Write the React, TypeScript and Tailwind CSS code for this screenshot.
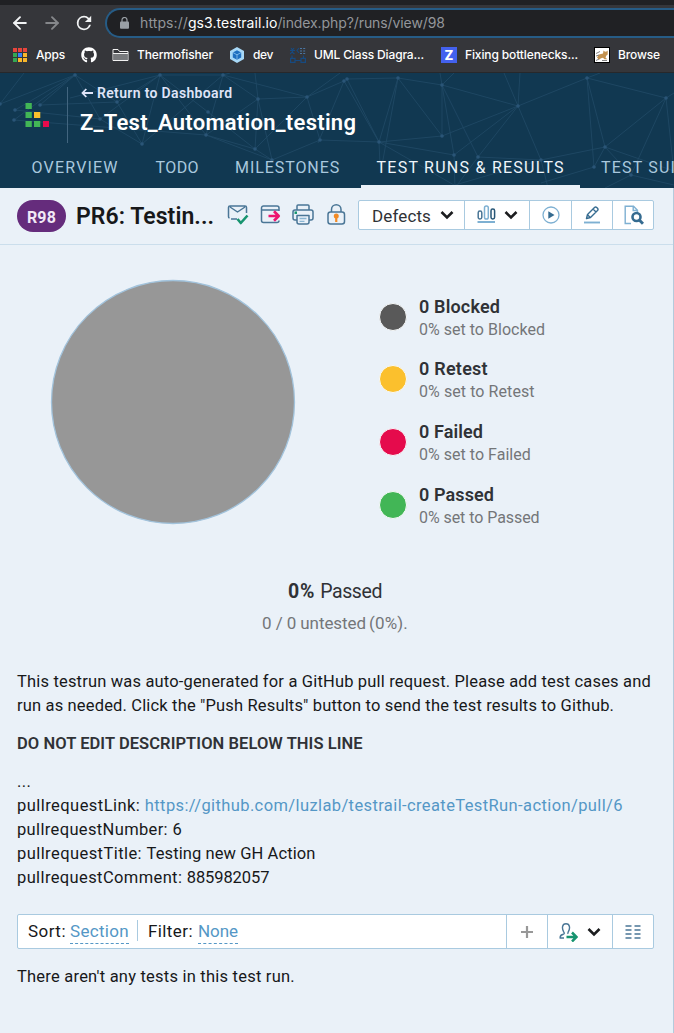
import type { ReactNode } from "react";
import { ArrowLeft, ArrowRight } from "lucide-react";
import { FaGithub } from "react-icons/fa";

const nodes: [number, number][] = [
  [75, 2], [0, 31], [15, 37], [14, 47], [40, 32], [117, 29], [160, 2], [142, 71],
  [100, 46], [223, 2], [258, 26], [307, 24], [206, 62], [208, 39], [255, 76], [272, 87],
  [320, 67], [344, 8], [347, 6], [398, 5], [442, 12], [379, 69], [442, 63], [518, 33],
  [454, 82], [478, 84], [541, 87], [587, 5], [605, 74], [666, 25], [594, 94], [631, 102],
];

const edges: [number, number][] = [
  [0, 1], [0, 2], [0, 3], [0, 4], [0, 5], [0, 8], [2, 8], [3, 12], [4, 5], [5, 7], [5, 6], [8, 6],
  [8, 7], [6, 7], [6, 12], [6, 13], [6, 9], [9, 12], [9, 10], [9, 7], [9, 11], [10, 14], [10, 11],
  [10, 12], [12, 15], [12, 14], [13, 14], [14, 11], [15, 16], [14, 15], [11, 16], [11, 17], [16, 21],
  [15, 10], [17, 21], [18, 21], [18, 19], [19, 21], [19, 22], [19, 20], [20, 22], [20, 23],
  [20, 24], [20, 25], [22, 23], [22, 21], [21, 24], [23, 24], [23, 25], [23, 26], [23, 27],
  [25, 26], [26, 28], [27, 28], [27, 30], [27, 29], [28, 29], [28, 30], [28, 31], [29, 31],
];

function Network() {
  return (
    <svg className="absolute inset-0 h-full w-full" viewBox="0 0 674 115" preserveAspectRatio="none">
      <g stroke="#295472" strokeWidth="0.9" fill="none" opacity="0.6">
        {edges.map(([a, b], i) => (
          <line key={i} x1={nodes[a][0]} y1={nodes[a][1]} x2={nodes[b][0]} y2={nodes[b][1]} />
        ))}
        <path d="M0 31L24 0M160 2L70 25M223 2L230 0M255 0L258 26M307 24L340 0M344 8L318 70M398 5L382 92M442 12L440 0M442 12L454 0M518 33L504 0M518 33L520 0M587 5L600 0M666 25L674 20M666 25L673 90M379 69L380 92M379 69L454 112M454 82L455 115M478 84L455 115M541 87L548 115M541 87L455 112M594 94L541 110M631 102L605 115M631 102L674 112M605 74L674 98" />
      </g>
      {nodes.map(([x, y], i) => (
        <circle key={i} cx={x} cy={y} r="1.8" fill="#2a5577" />
      ))}
    </svg>
  );
}

function Chevron() {
  return (
    <svg width="14" height="10" viewBox="0 0 14 10" fill="none" stroke="#1c1d1f" strokeWidth="2.6">
      <path d="M1.5 2L7 7.5L12.5 2" />
    </svg>
  );
}

function Bookmark({ icon, gap, children }: { icon: ReactNode; gap: string; children: ReactNode }) {
  return (
    <div className={`flex items-center ${gap}`}>
      {icon}
      {children}
    </div>
  );
}

const appColors = ["#e8453c", "#e8453c", "#e8453c", "#34a853", "#3b82f6", "#f9b72b", "#34a853", "#f9b72b", "#f9b72b"];

function Browser() {
  return (
    <div className="h-[73px] border-t-[5px] border-b border-t-[#202124] border-b-[#27282b] bg-[#35363a] font-['Inter',sans-serif]">
      <div className="flex h-[36px] items-center text-[#f1f3f4]">
        <ArrowLeft className="ml-[10px]" size={20} strokeWidth={2.3} />
        <ArrowRight className="ml-[12px] text-[#85878a]" size={20} strokeWidth={2.3} />
        <svg className="ml-[13px]" width="18" height="18" viewBox="0 0 24 24" fill="currentColor">
          <path d="M17.65 6.35A7.96 7.96 0 0 0 12 4a8 8 0 1 0 7.73 10h-2.08A6 6 0 1 1 12 6c1.66 0 3.14.69 4.22 1.78L13 11h7V4z" transform="translate(-2.4 -2.4) scale(1.2)" />
        </svg>
        <div className="ml-[12px] flex h-[30px] flex-1 items-center rounded-l-full border-2 border-r-0 border-[#265c86] bg-[#202124] pl-[13px] text-[14px] leading-none text-[#93969a]">
          <svg width="9" height="12" viewBox="0 0 9 12">
            <rect y="4.5" width="9" height="7.2" rx="1" fill="#9aa0a6" />
            <path d="M2 5V3a2.5 2.5 0 0 1 5 0v2" fill="none" stroke="#9aa0a6" strokeWidth="1.2" />
          </svg>
          <span className="ml-[11px] tracking-[0.1px]">https://</span>
          <span className="tracking-[0.05px] text-white">gs3.testrail.io</span>
          <span className="tracking-[-0.09px]">/index.php?/runs/view/98</span>
        </div>
      </div>
      <div className="flex h-[28px] items-center text-[12px] leading-none font-medium whitespace-nowrap text-white">
        <div className="flex items-center pl-[13px]">
          <div className="grid grid-cols-3 gap-x-[1px] gap-y-[1px]">
            {appColors.map((c, i) => (
              <span key={i} className="h-[4px] w-[4px]" style={{ backgroundColor: c }} />
            ))}
          </div>
          <span className="ml-[9px] w-[45px] tracking-[-0.2px]">Apps</span>
          <FaGithub size={16} />
        </div>
        <Bookmark
          gap="ml-[15px] gap-[8px]"
          icon={
            <svg width="17" height="14" viewBox="0 0 17 14" fill="none" stroke="#f1f1f1">
              <path d="M1 12.5V1.5h5l1.5 2H16v9zM1 5.5h15" />
              <path d="M1.5 6h14v6h-14z" fill="#77797c" stroke="none" />
            </svg>
          }
        >
          <span className="w-[92px] tracking-[-0.15px]">Thermofisher</span>
        </Bookmark>
        <Bookmark
          gap="gap-[8px]"
          icon={
            <svg width="16" height="16" viewBox="0 0 16 16">
              <path d="M8 0l7 4v8l-7 4-7-4V4z" fill="#a7d8f7" />
              <path d="M8 3.2l4.2 2.3v5L8 12.800l-4.200-2.300v-5z" fill="#1e6fc0" />
              <path d="M4 5.6l4 2.2 4-2.200M8 7.800v4.800" stroke="#8fc7ef" strokeWidth=".8" fill="none" />
            </svg>
          }
        >
          <span className="w-[37px] tracking-[-0.38px]">dev</span>
        </Bookmark>
        <Bookmark
          gap="gap-[8px]"
          icon={
            <svg width="16" height="16" viewBox="0 0 16 16" fill="none" stroke="#174a80" strokeWidth="1.2">
              <path d="M1 1l1.500 2L4 1M2.500 3v3M0 3.500h5M0 7l2-2 2.500 2M9 1L7 3.500 9 6" />
              <path d="M10 1.500h6M10 4h6M10 6.500h6" stroke="#4a76a3" strokeDasharray="2 1.200" />
              <path d="M.6 11.400h4.400v4H.6zM11 11.400h4.400v4H11zM5 13.500h6M2 8.500v3M13.500 8.500v3" />
            </svg>
          }
        >
          <span className="w-[127px] tracking-[-0.15px]">UML Class Diagra...</span>
        </Bookmark>
        <Bookmark
          gap="gap-[8px]"
          icon={<span className="flex h-4 w-4 items-center justify-center bg-[#4361ee] text-[13px] font-extrabold">Z</span>}
        >
          <span className="w-[129px] tracking-[-0.12px]">Fixing bottlenecks...</span>
        </Bookmark>
        <Bookmark
          gap="gap-[8px]"
          icon={
            <svg width="16" height="16" viewBox="0 0 16 16">
              <rect width="16" height="16" fill="#000" />
              <rect x="1" y="1" width="14" height="14" fill="#fff" />
              <path d="M3 10.500l2-3 4-1 .5-3 1.500 1.200 1.500-.2 1.200-1v4l-1.500 1.200-.7 2 2 1.500h-3l-1.500-1.500-2 .5-2 1.500z" fill="#c4924f" />
              <path d="M2 6.500l4-2M2 9l3-1M2 13.500l3-1.500M8 13.500h5" stroke="#666" strokeWidth=".8" />
            </svg>
          }
        >
          <span className="tracking-[-0.13px]">Browse</span>
        </Bookmark>
      </div>
    </div>
  );
}

function Header() {
  return (
    <header className="relative h-[115px] overflow-hidden bg-[#113851]">
      <Network />
      <div className="relative flex h-full flex-col">
        <div className="flex h-[75px] pt-[14px]">
          <svg className="mt-[16px] ml-[25px]" width="25" height="25" viewBox="0 0 25 25">
            <path d="M.5 0h6.3v6H.5zM.5 9h6.3v6H.5zM.5 18h6.3v6H.5zM9 18h6.3v6H9z" fill="#42b656" />
            <path d="M9 9h6.3v6H9z" fill="#fbc02d" />
            <path d="M18 18h6v6h-6z" fill="#e50b4c" />
          </svg>
          <div className="ml-[17px] h-[56px] w-px bg-[#42657f]" />
          <div className="ml-[12px] flex flex-col whitespace-nowrap">
            <div className="mt-[-4px] flex h-[20px] items-center pl-[1px] text-[14px] font-semibold text-[#dfe4f8]">
              <svg className="mr-[4px]" width="12" height="10" viewBox="0 0 12 10" fill="none" stroke="currentColor" strokeWidth="1.8">
                <path d="M12 5H1.5M5.3 1L1.5 5l3.8 4" />
              </svg>
              <span className="tracking-[0.34px]">Return to Dashboard</span>
            </div>
            <h1 className="mt-[6px] h-[28px] text-[22px] leading-[28px] font-semibold tracking-[0.27px] text-white">Z_Test_Automation_testing</h1>
          </div>
        </div>
        <nav className="flex h-[40px] pl-[31.500px] text-[16px] leading-[40px] whitespace-nowrap text-[#a9c8de]">
          <span className="w-[124px] shrink-0 tracking-[1.2px]">OVERVIEW</span>
          <span className="w-[79.5px] shrink-0 tracking-[0.4px]">TODO</span>
          <span className="w-[126px] shrink-0 tracking-[0.92px]">MILESTONES</span>
          <span className="h-[40px] w-[219px] shrink-0 border-b-[3px] border-[#eaf1f8] pl-[15.500px] tracking-[1.25px] text-[#eef5fb]">TEST RUNS &amp; RESULTS</span>
          <span className="ml-[21px] shrink-0 tracking-[1.2px]">TEST SUITES &amp; CASES</span>
        </nav>
      </div>
    </header>
  );
}

const iconStroke = { fill: "none", stroke: "#4a7696", strokeWidth: 1.5, strokeLinejoin: "round" as const };

function RunBar() {
  return (
    <div className="flex h-[57px] items-start border-b border-[#cbdeec] pt-[12px] pl-[17px]">
      <span className="flex h-[32px] w-[49px] shrink-0 items-center justify-center rounded-full bg-[#652c7c] pt-[3px] text-[16px] font-bold tracking-[0.2px] text-[#f1e8f6]">R98</span>
      <h2 className="ml-[10px] w-[151px] shrink-0 text-[23px] leading-[34px] font-semibold tracking-[0.05px] whitespace-nowrap text-[#17181a]">PR6: Testin...</h2>
      <div className="flex shrink-0 pt-[4px]">
        <svg width="22" height="22" viewBox="0 0 22 22" {...iconStroke}>
          <path d="M10 15H4M2.5 14A1.500 1.500 0 0 1 1.500 12.500V3.500A1.500 1.500 0 0 1 3 2h15a1.500 1.500 0 0 1 1.500 1.500V9M3 3l7.500 5L18 3" />
          <path d="M10.500 15l3.300 4 6.700-7.500" stroke="#17946f" strokeWidth="2.600" />
        </svg>
        <svg className="ml-[11px]" width="22" height="22" viewBox="0 0 22 22" {...iconStroke}>
          <path d="M19 7V4a2 2 0 0 0-2-2H3.500a2 2 0 0 0-2 2v12.500a2 2 0 0 0 2 2H17a2 2 0 0 0 2-2M1.500 6H19" />
          <path d="M8.500 12h10M14 7.300l4.700 4.700-4.700 4.700" stroke="#ec1570" strokeWidth="2.700" />
        </svg>
        <svg className="ml-[10px]" width="22" height="22" viewBox="0 0 22 22" {...iconStroke}>
          <path d="M5 6V2a1 1 0 0 1 1-1h10a1 1 0 0 1 1 1v4M5 16H3a2 2 0 0 1-2-2V8a2 2 0 0 1 2-2h16a2 2 0 0 1 2 2v6a2 2 0 0 1-2 2h-2M5 11.5h12V18a2 2 0 0 1-2 2H7a2 2 0 0 1-2-2z" />
          <path d="M7.5 14.5h7M7.5 17.3h5" stroke="#8ab6d3" strokeWidth="1.3" />
          <path d="M2.500 8.700H5" stroke="#15946f" strokeWidth="2.500" />
        </svg>
        <svg className="ml-[13px]" width="20" height="22" viewBox="0 0 20 22" {...iconStroke}>
          <path d="M4.500 8V5.500a4.750 4.750 0 0 1 9.500 0V8" />
          <rect x="1" y="8" width="16.500" height="12" rx="2.500" />
          <circle cx="9.250" cy="12" r="2.500" fill="#f28a24" stroke="none" />
          <path d="M9.250 12v6" stroke="#f28a24" strokeWidth="2.200" />
        </svg>
      </div>
      <div className="ml-[11px] flex h-[30px] w-[296px] shrink-0 divide-x divide-[#a9cae0] rounded-[2px] border border-[#a9cae0] bg-white">
        <div className="flex w-[106px] items-center pl-[13px] text-[17px] text-[#303236]">
          <span className="mr-[9px] pt-[3px] leading-[27px] tracking-[0.12px]">Defects</span>
          <Chevron />
        </div>
        <div className="flex w-[65px] items-center pl-[12px]">
          <svg className="mr-[8px] -translate-y-[1px]" width="19" height="20" viewBox="0 0 19 20" fill="none" strokeWidth="1.500">
            <rect x="1.200" y="7" width="3.600" height="8" rx="1.700" stroke="#4a7696" />
            <rect x="7.500" y="2" width="3.800" height="13" rx="1.800" stroke="#7eb0d2" />
            <rect x="14" y="5" width="3.600" height="10" rx="1.700" stroke="#275676" />
            <path d="M.5 18h17.500" stroke="#7eb0d2" strokeWidth="2" />
          </svg>
          <Chevron />
        </div>
        <div className="flex w-[42px] items-center justify-center">
          <svg width="18" height="18" viewBox="0 0 18 18">
            <circle cx="9" cy="9" r="8" fill="none" stroke="#7eb0d2" strokeWidth="1.300" />
            <path d="M6.300 5.300v7.400L12.500 9z" fill="#356b90" />
          </svg>
        </div>
        <div className="flex w-[41px] items-center justify-center">
          <svg width="18" height="18" viewBox="0 0 18 18" fill="none" stroke="#356b90" strokeWidth="1.400" strokeLinejoin="round">
            <path d="M3.500 12.500l1-4 7-7a1.600 1.600 0 0 1 2.200 0l.8.8a1.600 1.600 0 0 1 0 2.200l-7 7zM10 3l3 3M4.500 8.700l3 3" />
            <path d="M1 16.500h16" stroke="#7eb0d2" strokeWidth="1.900" />
          </svg>
        </div>
        <div className="flex flex-1 items-center justify-center">
          <svg className="ml-[1px]" width="20" height="20" viewBox="0 0 20 20" fill="none">
            <path d="M7 18.500H1.200V1.200h8.300l4 4v2M9.200 1.200v4.300h4.300" stroke="#7eb0d2" strokeWidth="1.400" />
            <circle cx="12.500" cy="12" r="4" stroke="#356b90" strokeWidth="2.600" />
            <path d="M15.500 15.200l3.500 3.600" stroke="#356b90" strokeWidth="3" />
          </svg>
        </div>
      </div>
    </div>
  );
}

const stats = [
  { name: "Blocked", dot: "bg-[#595959]", head: "tracking-[0.16px]", sub: "tracking-[0.02px]" },
  { name: "Retest", dot: "bg-[#fbc02d]", head: "tracking-[0.24px]", sub: "tracking-[0.08px]" },
  { name: "Failed", dot: "bg-[#e50b4c]", head: "tracking-[0.1px]", sub: "tracking-[0.03px]" },
  { name: "Passed", dot: "bg-[#42b656]", head: "tracking-[0.1px]", sub: "tracking-[-0.06px]" },
];

function Summary() {
  return (
    <>
      <section className="flex h-[314px] pt-[34px] pl-[50px]">
        <svg width="246" height="246" viewBox="0 0 246 246">
          <circle cx="123" cy="123" r="121.500" fill="#979797" stroke="#a2c3dc" strokeWidth="1.300" />
        </svg>
        <div className="ml-[83px] flex flex-col pt-[14.600px]">
          {stats.map((s) => (
            <div key={s.name} className="flex h-[62.7px]">
              <span className={`mt-[9px] h-[28px] w-[28px] rounded-full border border-[#f8fafa] ${s.dot}`} />
              <div className="ml-[12px] whitespace-nowrap">
                <div className={`h-[25px] text-[18px] leading-[26px] font-semibold text-[#303236] ${s.head}`}>0 {s.name}</div>
                <div className={`text-[16px] leading-[22px] text-[#747679] ${s.sub}`}>0% set to {s.name}</div>
              </div>
            </div>
          ))}
        </div>
      </section>
      <section className="flex h-[110px] flex-col items-center pt-[18px] pr-[3px] whitespace-nowrap">
        <div className="h-[31px] text-[19.5px] leading-[30px] text-[#303236]">
          <b className="tracking-[0.9px]">0%</b> <span className="tracking-[-0.4px]">Passed</span>
        </div>
        <div className="text-[17px] leading-[30px] text-[#747679]">
          <span className="mr-[3px] tracking-[-0.08px]">0 / 0 untested</span>
          <span className="tracking-[0.15px]">(0%).</span>
        </div>
      </section>
    </>
  );
}

function Description() {
  return (
    <section className="h-[245px] pt-px pl-[17px] text-[16.5px] leading-[24px] whitespace-nowrap text-[#17181a]">
      <p className="tracking-[0.17px]">This testrun was auto-generated for a GitHub pull request. Please add test cases and</p>
      <p className="tracking-[0.16px]">run as needed. Click the "Push Results" button to send the test results to Github.</p>
      <p className="mt-[13.500px] font-semibold tracking-[0.07px] text-[#303236]">DO NOT EDIT DESCRIPTION BELOW THIS LINE</p>
      <p className="mt-[14px] tracking-[0.4px]">...</p>
      <p>
        <span className="tracking-[0.45px]">pullrequestLink: </span>
        <a className="tracking-[0.39px] text-[#5497c6]">https://github.com/luzlab/testrail-createTestRun-action/pull/6</a>
      </p>
      <p className="tracking-[0.35px]">pullrequestNumber: 6</p>
      <p>
        <span className="tracking-[0.43px]">pullrequestTitle: </span>
        <span className="tracking-[0.09px]">Testing new GH Action</span>
      </p>
      <p>
        <span className="tracking-[0.38px]">pullrequestComment: </span>
        <span className="tracking-[-0.100px]">885982057</span>
      </p>
    </section>
  );
}

function SortBar() {
  return (
    <div className="ml-[17px] flex h-[35px] w-[637px] divide-x divide-[#a9cae0] rounded-[2px] border border-[#a9cae0] bg-white text-[17px] text-[#17181a]">
      <div className="flex w-[489px] items-center whitespace-nowrap">
        <span className="ml-[10px] tracking-[0.47px]">Sort:</span>
        <span className="mt-[1px] ml-[4px] h-[23px] border-b border-dashed border-[#5497c6] leading-[21px] tracking-[0.31px] text-[#5497c6]">Section</span>
        <span className="mb-[3px] ml-[8px] h-[21px] w-px bg-[#a9cae0]" />
        <span className="ml-[10px] tracking-[0.41px]">Filter:</span>
        <span className="mt-[1px] ml-[5px] h-[23px] border-b border-dashed border-[#5497c6] leading-[21px] tracking-[-0.06px] text-[#5497c6]">None</span>
      </div>
      <div className="flex w-[41px] items-center justify-center">
        <svg width="12" height="12" viewBox="0 0 12 12" stroke="#989898" strokeWidth="2.200">
          <path d="M0 6h12M6 0v12" />
        </svg>
      </div>
      <div className="flex w-[65px] items-center pl-[11px]">
        <svg className="mr-[9px]" width="19" height="20" viewBox="0 0 19 20" fill="none" stroke="#4a7696" strokeWidth="1.400">
          <path d="M5 16H1.200c-.4-2.600.6-3.300 3.200-3.800 1.200-.4 1-1.300.3-2.400C2.800 6.500 2.800 1.700 7 1.700s4.200 4.800 2.300 8.100c-.4.900-.6 1.400-.2 2" />
          <path d="M7.500 15h9M13 10.500l4.500 4.500-4.500 4.500" stroke="#17946f" strokeWidth="2.500" />
        </svg>
        <Chevron />
      </div>
      <div className="flex flex-1 items-center justify-center">
        <svg width="16" height="14" viewBox="0 0 16 14" strokeWidth="1.400">
          <path d="M.5 1h6M9.500 1h6M.5 5h6M9.500 5h6M.5 9h6M9.500 9h6M.5 13h6M9.500 13h6" stroke="#4a7696" />
        </svg>
      </div>
    </div>
  );
}

export default function App() {
  return (
    <div className="flex h-[1033px] w-[674px] flex-col overflow-hidden bg-[#eaf1f8] font-['Roboto',sans-serif]">
      <Browser />
      <Header />
      <main className="flex-1 border-r border-[#b4cbdc]">
        <RunBar />
        <Summary />
        <Description />
        <SortBar />
        <p className="mt-[16px] ml-[17px] text-[16.5px] leading-[24px] tracking-[0.22px] text-[#17181a]">There aren't any tests in this test run.</p>
      </main>
    </div>
  );
}
